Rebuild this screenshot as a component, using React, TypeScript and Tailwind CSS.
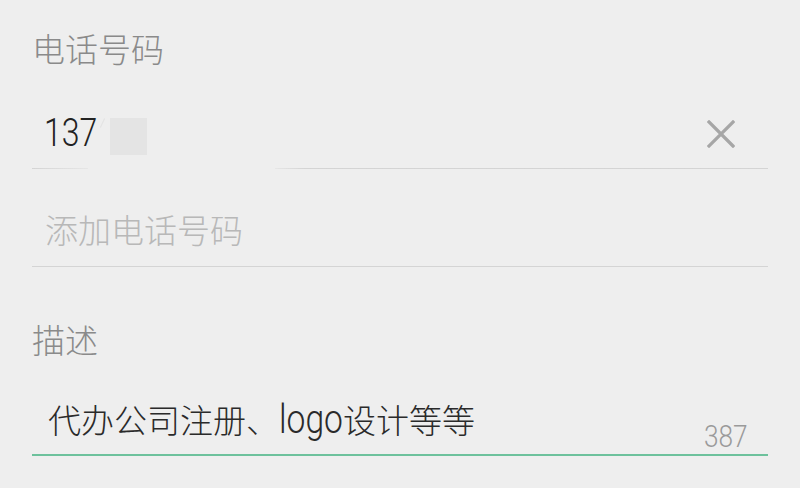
const font = "font-['Noto_Sans_CJK_SC',sans-serif]";
const latin = "font-['Roboto','Noto_Sans_CJK_SC',sans-serif]";

function ClearIcon() {
  return (
    <svg width="28" height="28" viewBox="0 0 28 28" fill="none">
      <path d="M2 2L26 26M26 2L2 26" stroke="#a6a6a6" strokeWidth="3.2" strokeLinecap="square" />
    </svg>
  );
}

// tall, narrow digits like the phone's system font
function Narrow({ text, width, className }: { text: string; width: number; className: string }) {
  return (
    <span className="inline-block overflow-visible whitespace-nowrap" style={{ width }}>
      <span className={`inline-block origin-left scale-x-[0.82] ${latin} ${className}`}>{text}</span>
    </span>
  );
}

export default function App() {
  return (
    <div className={`w-[800px] h-[488px] bg-[#eeeeee] px-8 overflow-hidden font-light ${font}`}>
      {/* phone label */}
      <div className="pt-[28px] h-[69px] text-[33px] leading-[40px] text-[#8a8a8a]">电话号码</div>

      {/* phone row */}
      <div className="mt-[30px] h-[69px] flex items-center pl-3 pr-[33px]">
        <Narrow text="137" width={55} className="text-[39px] leading-none text-[#222222] font-light" />
        <span className="ml-[3px] h-[10px] w-px bg-[#e2e2e2] rotate-[25deg] -mt-[22px]" />
        <span className="ml-[7px] mt-[6px] w-[37px] h-[37px] bg-[#e4e4e4]" />
        <div className="flex-1" />
        <ClearIcon />
      </div>
      <div className="flex h-px">
        <div className="w-[56px] bg-gradient-to-r from-[#d4d4d4] to-[#e6e6e6]" />
        <div className="w-[187px]" />
        <div className="flex-1 bg-gradient-to-r from-[#e6e6e6] via-[#d4d4d4] via-[6%] to-[#d4d4d4]" />
      </div>

      {/* add phone */}
      <div className="mt-[27px] h-[71px] flex items-center pl-[13px] border-b border-[#d4d4d4]">
        <span className="text-[33px] leading-[40px] text-[#b8b8b8] -mt-[4px]">添加电话号码</span>
      </div>

      {/* description label */}
      <div className="mt-[52px] text-[33px] leading-[40px] text-[#8a8a8a]">描述</div>

      {/* description row */}
      <div className="mt-[25px] h-[72px] flex justify-between items-center pl-[16px] pr-[17px] border-b-2 border-[#6dc19c]">
        <span className="flex items-center text-[33px] leading-[40px] text-[#2a2a2a] whitespace-nowrap">
          代办公司注册、
          <Narrow text="logo" width={64} className="text-[41px] leading-[40px] font-light" />
          设计等等
        </span>
        <span className="self-end pb-[2px]">
          <Narrow text="387" width={47} className="text-[32px] leading-none text-[#9a9a9a] font-light" />
        </span>
      </div>
    </div>
  );
}
